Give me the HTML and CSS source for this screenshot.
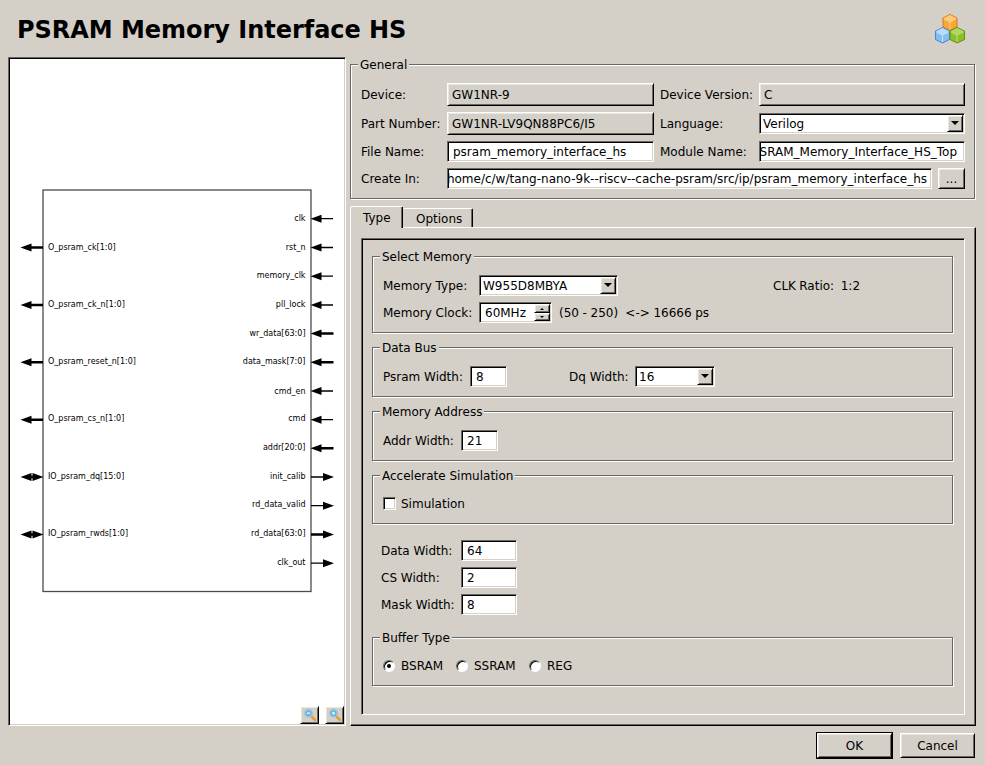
FILE: index.html
```html
<!DOCTYPE html>
<html lang="en">
<head>
<meta charset="utf-8">
<title>PSRAM Memory Interface HS</title>
<link rel="stylesheet" href="styles.css">
</head>
<body>
<header class="header">
  <h1>PSRAM Memory Interface HS</h1>
  <svg class="logo" width="32" height="32" viewBox="0 0 32 32" stroke-linejoin="round">
    <g stroke="#d9781c"><path d="M9 5l7-3.500 7 3.500v9l-7 3.500-7-3.500z" fill="#f9a63a"/><path d="M9.500 5.200l6.500-3.200 6.500 3.200-6.500 3.300z" fill="#fdcb7a" stroke="none"/><path d="M10 6l6 3v7.500M22 6l-6 3" fill="none" stroke="#ffdf9c" stroke-width=".8"/></g>
    <g stroke="#4a87c8"><path d="M1.500 18l7-3.500 7 3.500v8.500l-7 3.500-7-3.500z" fill="#86bdf0"/><path d="M2 18.200l6.500-3.200 6.500 3.200-6.500 3.300z" fill="#b9dcfa" stroke="none"/><path d="M2.500 19l6 3v7M14.500 19l-6 3" fill="none" stroke="#d8edff" stroke-width=".8"/></g>
    <g stroke="#5d9114"><path d="M16 18l7-3.500 7.500 3.500v8.500l-7.500 3.500-7-3.500z" fill="#8bbf2c"/><path d="M16.500 18.200l6.500-3.200 7 3.200-7 3.300z" fill="#b0d85c" stroke="none"/><path d="M17 19l6 3v7M29.500 19l-6.500 3" fill="none" stroke="#cfe888" stroke-width=".8"/></g>
  </svg>
</header>
<main class="main">
  <section class="preview sunken">
    <svg class="diagram" width="334" height="647" viewBox="10 59 334 647">
      <defs>
        <path id="l" d="M0 0l11-4v8z"/>
        <path id="r" d="M0 0l-11-4v8z"/>
      </defs>
      <rect x="43" y="190" width="268" height="401.500" fill="none" stroke="#4c4c4c" stroke-width="1.300"/>
      <g class="pins">
        <text x="48" y="250">O_psram_ck[1:0]</text>
        <text x="48" y="307">O_psram_ck_n[1:0]</text>
        <text x="48" y="364">O_psram_reset_n[1:0]</text>
        <text x="48" y="421">O_psram_cs_n[1:0]</text>
        <text x="48" y="479">IO_psram_dq[15:0]</text>
        <text x="48" y="536">IO_psram_rwds[1:0]</text>
      </g>
      <g class="pins end">
        <text x="305.500" y="221">clk</text>
        <text x="305.500" y="250">rst_n</text>
        <text x="305.500" y="278">memory_clk</text>
        <text x="305.500" y="307">pll_lock</text>
        <text x="305.500" y="336">wr_data[63:0]</text>
        <text x="305.500" y="364">data_mask[7:0]</text>
        <text x="305.500" y="394">cmd_en</text>
        <text x="305.500" y="421">cmd</text>
        <text x="305.500" y="450">addr[20:0]</text>
        <text x="305.500" y="479">init_calib</text>
        <text x="305.500" y="507">rd_data_valid</text>
        <text x="305.500" y="536">rd_data[63:0]</text>
        <text x="305.500" y="565">clk_out</text>
      </g>
      <path class="bus" d="M28 247.500h15M28 305h15M28 362.300h15M28 419.700h15M28 477h10M28 534.500h10M318 333.500h15.500M318 362.300h15.500M318 448.300h15.500M311 534.500h15"/>
      <path class="wire" d="M318 218.700h15M318 247.500h15M318 276.200h15M318 305h15M318 391h15M318 419.700h15M311 477h15M311 505.700h15M311 563.200h15"/>
      <g>
        <use href="#l" x="20.500" y="247.500"/><use href="#l" x="20.500" y="305"/><use href="#l" x="20.500" y="362.300"/><use href="#l" x="20.500" y="419.700"/><use href="#l" x="20.500" y="477"/><use href="#l" x="20.500" y="534.500"/>
        <use href="#r" x="43.500" y="477"/><use href="#r" x="43.500" y="534.500"/>
        <use href="#l" x="310.500" y="218.700"/><use href="#l" x="310.500" y="247.500"/><use href="#l" x="310.500" y="276.200"/><use href="#l" x="310.500" y="305"/><use href="#l" x="310.500" y="333.500"/><use href="#l" x="310.500" y="362.300"/><use href="#l" x="310.500" y="391"/><use href="#l" x="310.500" y="419.700"/><use href="#l" x="310.500" y="448.300"/>
        <use href="#r" x="334" y="477"/><use href="#r" x="334" y="505.700"/><use href="#r" x="334" y="534.500"/><use href="#r" x="334" y="563.200"/>
      </g>
    </svg>
    <div class="zoombar">
      <button class="raised zoom"><svg width="14" height="14" viewBox="0 0 14 14"><path d="M8.500 8.500l3.500 3.500" stroke="#e0a040" stroke-width="2.600" stroke-linecap="round"/><circle cx="5.500" cy="5.200" r="3.700" fill="#62b8ea" stroke="#a9bfd0" stroke-width="1.400"/><path d="M4 5.200h3" stroke="#e8f8ff" stroke-width="1.400"/></svg></button>
      <button class="raised zoom"><svg width="14" height="14" viewBox="0 0 14 14"><path d="M8.500 8.500l3.500 3.500" stroke="#e0a040" stroke-width="2.600" stroke-linecap="round"/><circle cx="5.500" cy="5.200" r="3.700" fill="#62b8ea" stroke="#a9bfd0" stroke-width="1.400"/><path d="M4 5.200h3M5.500 3.700v3" stroke="#e8f8ff" stroke-width="1.200"/></svg></button>
    </div>
  </section>
  <section class="settings">
    <div class="group general">
      <div class="legend">General</div>
      <div class="form">
        <span>Device:</span><div class="raised value">GW1NR-9</div>
        <span>Device Version:</span><div class="raised value">C</div>
        <span>Part Number:</span><div class="raised value">GW1NR-LV9QN88PC6/I5</div>
        <span>Language:</span><div class="field combo"><span>Verilog</span><i class="raised drop"></i></div>
        <span>File Name:</span><div class="field">psram_memory_interface_hs</div>
        <span>Module Name:</span><div class="field tail module"><span>PSRAM_Memory_Interface_HS_Top</span></div>
        <span>Create In:</span>
        <div class="path"><div class="field tail"><span>/home/c/w/tang-nano-9k--riscv--cache-psram/src/ip/psram_memory_interface_hs</span></div><button class="raised browse">...</button></div>
      </div>
    </div>
    <nav class="tabs"><div class="tab active">Type</div><div class="tab">Options</div></nav>
    <div class="raised pane">
      <div class="sunken sheet">
        <div class="group memory">
          <div class="legend">Select Memory</div>
          <div class="row type"><span class="label">Memory Type:</span><div class="field combo w139"><span>W955D8MBYA</span><i class="raised drop"></i></div><span class="ratio">CLK Ratio:&nbsp; 1:2</span></div>
          <div class="row clock"><span class="label">Memory Clock:</span><div class="field spin"><span>60MHz</span><div class="steps"><i class="raised step up"></i><i class="raised step"></i></div></div><span class="range">(50 - 250)&nbsp; &lt;-&gt; 16666 ps</span></div>
        </div>
        <div class="group bus-group">
          <div class="legend">Data Bus</div>
          <div class="row"><span class="label psram">Psram Width:</span><div class="field w37">8</div><span class="label dq">Dq Width:</span><div class="field combo w80"><span>16</span><i class="raised drop"></i></div></div>
        </div>
        <div class="group address">
          <div class="legend">Memory Address</div>
          <div class="row"><span class="label addr">Addr Width:</span><div class="field w37">21</div></div>
        </div>
        <div class="group accel">
          <div class="legend">Accelerate Simulation</div>
          <div class="row"><i class="check sunken"></i><span>Simulation</span></div>
        </div>
        <div class="widths">
          <span>Data Width:</span><div class="field">64</div>
          <span>CS Width:</span><div class="field">2</div>
          <span>Mask Width:</span><div class="field">8</div>
        </div>
        <div class="group buffer">
          <div class="legend">Buffer Type</div>
          <div class="row">
            <div class="option"><i class="radio on"></i>BSRAM</div>
            <div class="option"><i class="radio"></i>SSRAM</div>
            <div class="option"><i class="radio"></i>REG</div>
          </div>
        </div>
      </div>
    </div>
  </section>
</main>
<footer class="footer"><div class="default"><button class="raised action">OK</button></div><button class="raised action">Cancel</button></footer>
</body>
</html>
```
FILE: styles.css
```css
:root { --bg: #d4d0c8; --dark: #6a6864; --light: #e8e6e1; }
* { box-sizing: border-box; }
body {
  margin: 0; width: 985px; height: 765px; overflow: hidden;
  background: var(--bg); color: #000;
  font: 12px/14px "DejaVu Sans", sans-serif; white-space: nowrap;
}
button { font: inherit; color: inherit; padding: 0; border-radius: 0; }
i { display: block; flex: none; }

.raised {
  background: var(--bg); border: 1px solid; border-color: #fff #000 #000 #fff;
  box-shadow: inset 1px 1px var(--light), inset -1px -1px var(--dark);
}
.sunken, .field {
  border: 1px solid; border-color: var(--dark) #fff #fff var(--dark);
  box-shadow: inset 1px 1px #000, inset -1px -1px var(--bg);
}

.header { display: flex; justify-content: space-between; height: 57px; padding: 15px 19px 0 17px; }
h1 { margin: 0; font-size: 24px; line-height: 30px; font-weight: bold; letter-spacing: -.03px; }
.logo { margin-top: -2px; }

.main { display: flex; gap: 4px; padding: 0 9px 0 8px; height: 669px; }
.preview { width: 338px; background: #fff; padding: 1px; display: flex; flex-direction: column; }
.diagram { display: block; }
.pins { font-size: 8px; }
.end { text-anchor: end; }
.bus { stroke: #000; stroke-width: 2.4; }
.wire { stroke: #000; stroke-width: 1.3; }
.zoombar { display: flex; justify-content: flex-end; gap: 6px; }
.zoom { width: 19px; height: 18px; display: flex; align-items: center; justify-content: center; }

.settings { width: 626px; display: flex; flex-direction: column; }
.group { border: 1px solid var(--dark); box-shadow: 1px 1px #fff, inset 1px 1px #fff; }
.legend { width: fit-content; margin: -7px 0 -1px 7px; padding: 0 2px; background: var(--bg); }

.general { width: 625px; height: 135px; margin-top: 7px; flex: none; }
.form {
  display: grid; grid-template-columns: 86px 207px 6px 99px 206px;
  grid-template-rows: 23px 23px 21px 21px; row-gap: 6px; align-items: center;
  padding: 12px 0 0 10px;
}
.form > :nth-child(4n+3) { grid-column: 4; }
.form > :nth-child(13) { grid-column: 1; }
.form > .path { grid-column: 2 / 6; display: flex; gap: 6px; }
.path .field { width: 485px; }
.value { height: 23px; padding: 4px 4px 0; }
.field { height: 21px; background: #fff; padding: 3px 5px 0; overflow: hidden; }
.tail { display: flex; justify-content: flex-end; padding-right: 4px; }
.module { padding-right: 7px; }
.browse { width: 27px; height: 21px; }
.combo { display: flex; justify-content: space-between; padding: 1px 1px 0 3px; }
.combo span { padding-top: 2px; }
.drop { width: 16px; height: 17px; display: flex; justify-content: center; padding-top: 5px; }
.drop::after { content: ""; width: 8px; height: 4px; background: #000; clip-path: polygon(0 0, 100% 0, 50% 100%); }

.tabs { display: flex; align-items: flex-end; height: 22px; margin: 7px 0 -1px; position: relative; z-index: 1; }
.tab {
  width: 70px; height: 19px; padding: 3px 0 0 13px; margin-bottom: 1px;
  border: solid; border-width: 1px 1px 0 0; border-color: #fff #000;
  border-radius: 2px 2px 0 0; box-shadow: inset -1px 0 var(--dark);
}
.tab.active {
  width: 53px; height: 22px; padding: 4px 0 0 12px; margin-bottom: 0;
  border-left: 1px solid #fff; background: var(--bg);
}
.pane { flex: 1; padding: 10px; box-shadow: inset -1px -1px var(--dark); }
.sheet { width: 604px; height: 477px; padding: 17px 0 0 10px; }
.sheet .group { width: 581px; }
.row { display: flex; align-items: center; height: 21px; margin: 12px 0 0 10px; }
.memory { height: 77px; }
.clock { margin-top: 6px; }
.label { width: 96px; }
.w139 { width: 139px; }
.ratio { margin-left: 155px; word-spacing: -.5px; }
.spin { width: 73px; display: flex; justify-content: space-between; padding-right: 1px; }
.steps { margin-top: -2px; }
.step { width: 16px; height: 9px; display: flex; justify-content: center; padding-top: 3px; }
.step + .step { height: 8px; padding-top: 2px; }
.step::after { content: ""; width: 4px; height: 2px; background: #000; clip-path: polygon(0 0, 100% 0, 50% 100%); }
.up::after { transform: scaleY(-1); }
.range { margin-left: 7px; word-spacing: -.2px; }
.bus-group { height: 50px; margin-top: 14px; }
.psram { width: 87px; }
.w37 { width: 37px; }
.dq { width: 66px; margin-left: 62px; }
.w80 { width: 80px; }
.address { height: 50px; margin-top: 14px; }
.addr { width: 78px; }
.accel { height: 49px; margin-top: 14px; }
.accel .row { margin-top: 11px; gap: 5px; }
.check { width: 13px; height: 13px; background: #fff; }
.widths { display: grid; grid-template-columns: 80px 56px; row-gap: 6px; align-items: center; margin: 16px 0 22px 9px; }
.buffer { height: 49px; }
.buffer .row { margin-top: 11px; }
.option { display: flex; align-items: center; width: 73px; gap: 6px; }
.radio {
  width: 12px; height: 12px; border-radius: 50%; background: #fff;
  border: 1px solid; border-color: var(--dark) #fff #fff var(--dark);
  box-shadow: inset 1px 1px #000; padding: 3px;
}
.on::after { content: ""; display: block; width: 4px; height: 4px; border-radius: 50%; background: #000; }

.footer { display: flex; justify-content: flex-end; align-items: center; gap: 7px; padding-right: 10px; height: 39px; }
.default { background: #000; padding: 1px; }
.action { display: block; width: 75px; height: 25px; }
```
